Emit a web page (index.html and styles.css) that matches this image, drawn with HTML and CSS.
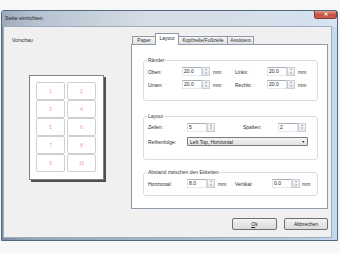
FILE: index.html
```html
<!DOCTYPE html>
<html lang="de">
<head>
    <meta charset="UTF-8">
    <title>Seite einrichten</title>
    <link rel="stylesheet" href="styles.css">
</head>
<body>
    <div class="window">
        <div class="titlebar">
            <span class="title">Seite einrichten</span>
            <span class="close">✕</span>
        </div>
        <div class="client">
            <div class="preview-col">
                <div class="caption">Vorschau</div>
                <div class="page">
                    <div class="cell">1</div><div class="cell">2</div>
                    <div class="cell">3</div><div class="cell">4</div>
                    <div class="cell">5</div><div class="cell">6</div>
                    <div class="cell">7</div><div class="cell">8</div>
                    <div class="cell">9</div><div class="cell">10</div>
                </div>
            </div>

            <div class="main-col">
                <div class="tabs">
                    <div class="tab tab-paper">Paper</div>
                    <div class="tab tab-layout active">Layout</div>
                    <div class="tab tab-kopf">Kopfzeile/Fußzeile</div>
                    <div class="tab tab-assist">Assistent</div>
                </div>

                <div class="panel">
                    <div class="group group-raender">
                        <div class="legend">Ränder</div>
                        <div class="row row-raender">
                            <span>Oben:</span>
                            <div class="spin"><span class="field">20.0</span><span class="arrows"><i>▲</i><i>▼</i></span></div>
                            <span class="unit">mm</span>
                            <span>Links:</span>
                            <div class="spin"><span class="field">20.0</span><span class="arrows"><i>▲</i><i>▼</i></span></div>
                            <span class="unit">mm</span>
                        </div>
                        <div class="row row-raender">
                            <span>Unten:</span>
                            <div class="spin"><span class="field">20.0</span><span class="arrows"><i>▲</i><i>▼</i></span></div>
                            <span class="unit">mm</span>
                            <span>Rechts:</span>
                            <div class="spin"><span class="field">20.0</span><span class="arrows"><i>▲</i><i>▼</i></span></div>
                            <span class="unit">mm</span>
                        </div>
                    </div>

                    <div class="group group-layout">
                        <div class="legend">Layout</div>
                        <div class="row row-layout">
                            <span>Zeilen:</span>
                            <div class="spin"><span class="field">5</span><span class="arrows"><i>▲</i><i>▼</i></span></div>
                            <span></span>
                            <span>Spalten:</span>
                            <div class="spin"><span class="field">2</span><span class="arrows"><i>▲</i><i>▼</i></span></div>
                        </div>
                        <div class="row row-order">
                            <span>Reihenfolge:</span>
                            <div class="select"><span>Left Top, Horizontal</span><span class="drop">▼</span></div>
                        </div>
                    </div>

                    <div class="group group-abstand">
                        <div class="legend">Abstand zwischen den Etiketten</div>
                        <div class="row row-abstand">
                            <span>Horizontal:</span>
                            <div class="spin"><span class="field">8.0</span><span class="arrows"><i>▲</i><i>▼</i></span></div>
                            <span class="unit">mm</span>
                            <span>Vertikal:</span>
                            <div class="spin"><span class="field">0.0</span><span class="arrows"><i>▲</i><i>▼</i></span></div>
                            <span class="unit unit-v">mm</span>
                        </div>
                    </div>
                </div>

                <div class="buttons">
                    <button class="btn btn-ok"><u>O</u>k</button>
                    <button class="btn btn-cancel">Abbrechen</button>
                </div>
            </div>
        </div>
    </div>
</body>
</html>
```

FILE: styles.css
```css
* {
    box-sizing: border-box;
}
body {
    margin: 0;
    background: #f6f7f8;
    font-family: "Liberation Sans", Arial, sans-serif;
    font-size: 5px;
    color: #2e2e2e;
}
.window {
    width: 337px;
    height: 231px;
    margin: 10px 0 0 1px;
    border: 1px solid #56687d;
    border-radius: 3px 3px 0 0;
    background: linear-gradient(to right, #7b8ea3, #93a6ba 10%, #a8bacc 55%, #b9cde2 90%, #c6d9ee);
    display: flex;
    flex-direction: column;
}
.titlebar {
    height: 16px;
    display: flex;
    justify-content: space-between;
    align-items: flex-start;
    padding-left: 3px;
    background: linear-gradient(to right, rgba(255,255,255,0.25), rgba(255,255,255,0.55) 45%, rgba(255,255,255,0.45) 80%, rgba(255,255,255,0.3));
}
.title {
    font-size: 5.5px;
    line-height: 15px;
    color: #1c1c1c;
}
.close {
    width: 23px;
    height: 8px;
    margin-top: 0;
    border: 1px solid #7d3b36;
    border-top: none;
    border-radius: 0 0 3px 3px;
    background: linear-gradient(#e29a8c, #c74f3f 55%, #d0624f);
    color: #fff;
    font-size: 5px;
    line-height: 7px;
    text-align: center;
    font-weight: bold;
}
.client {
    height: 210px;
    margin: 0 6px 3px 2px;
    background: #f0f0f0;
    box-shadow: 0 0 0 1px #9eadbc;
    display: flex;
}

/* Vorschau */
.preview-col {
    width: 127px;
    padding: 10px 0 0 8px;
}
.caption {
    line-height: 7px;
    height: 7px;
}
.page {
    width: 75px;
    height: 105px;
    margin: 31px 0 0 17px;
    padding: 6px 0 0 6px;
    background: #fff;
    border: 1px solid #808080;
    box-shadow: 2px 2px 0 #505050;
    display: grid;
    grid-template-columns: 29px 29px;
    grid-auto-rows: 18px;
    column-gap: 2px;
    align-content: start;
}
.cell {
    border: 1px solid #cfcfcf;
    border-radius: 2px;
    color: #f19191;
    font-size: 4.5px;
    display: flex;
    align-items: center;
    justify-content: center;
}

/* Tabs */
.main-col {
    width: 199px;
    padding-top: 6px;
    display: flex;
    flex-direction: column;
}
.tabs {
    height: 11px;
    display: flex;
    align-items: flex-end;
    padding-left: 1px;
    position: relative;
    z-index: 1;
}
.tab {
    height: 8px;
    border: 1px solid #8e9aa7;
    border-bottom: none;
    margin-right: -1px;
    background: linear-gradient(#f5f5f5, #e2e2e2);
    text-align: center;
    line-height: 7px;
    border-radius: 1px 1px 0 0;
}
.tab.active {
    height: 12px;
    margin-bottom: -1px;
    background: #fff;
    line-height: 9px;
}
.tab-paper { width: 24px; }
.tab-layout { width: 24px; }
.tab-kopf { width: 50px; }
.tab-assist { width: 27px; }

.panel {
    width: 197px;
    height: 165px;
    border: 1px solid #8e9aa7;
    background: #fff;
    padding: 15px 0 0 11px;
}

/* Gruppen */
.group {
    width: 175px;
    border: 1px solid #d5dfe5;
    border-radius: 3px;
    padding: 0 0 0 4px;
}
.legend {
    width: fit-content;
    height: 7px;
    line-height: 7px;
    margin: -4px 0 0 -1px;
    padding: 0 1px;
    background: #fff;
    color: #3a3a3a;
}
.group-raender {
    height: 41px;
}
.group-layout {
    height: 44px;
    margin-top: 15px;
}
.group-abstand {
    height: 24px;
    margin-top: 12px;
}
.row {
    display: grid;
    align-items: center;
}
.row-raender {
    height: 13px;
    grid-template-columns: 34px 28px 25px 32px 28px 20px;
}
.row-raender:first-of-type,
.legend + .row {
    margin-top: 1px;
}
.row-layout {
    height: 12px;
    margin-top: 2px;
    grid-template-columns: 39px 28px 28px 35px 28px;
}
.row-order {
    height: 13px;
    margin-top: 2px;
    grid-template-columns: 39px 121px;
}
.row-abstand {
    height: 13px;
    margin-top: 1px;
    grid-template-columns: 39px 28px 20px 37px 28px 10px;
}
.unit {
    padding-left: 3px;
}
.unit-v {
    padding-left: 2px;
}

/* Eingabefelder */
.spin {
    display: flex;
    height: 9px;
}
.field {
    width: 20px;
    border: 1px solid #abadb3;
    border-color: #abadb3 #dbdfe6 #e3e9ef #e2e3ea;
    background: #fff;
    line-height: 7px;
    padding-left: 1px;
    color: #222;
}
.arrows {
    width: 8px;
    display: flex;
    flex-direction: column;
    border: 1px solid #c5cdd6;
    background: linear-gradient(#f7f7f7, #e4e8ec);
}
.arrows i {
    flex: 1;
    font-style: normal;
    font-size: 2.5px;
    line-height: 3.5px;
    text-align: center;
    color: #56708f;
}
.select {
    height: 9px;
    border: 1px solid #7a7a7a;
    border-radius: 1px;
    background: linear-gradient(#f4f4f4, #e1e1e1);
    display: flex;
    justify-content: space-between;
    align-items: center;
    padding: 0 2px 0 2px;
    color: #222;
}
.drop {
    font-size: 3.5px;
    color: #111;
}

/* Buttons */
.buttons {
    display: flex;
    justify-content: flex-end;
    gap: 7px;
    margin-top: 9px;
    padding-right: 2px;
}
.btn {
    height: 12px;
    border: 1px solid #707070;
    border-radius: 2px;
    background: linear-gradient(#f3f3f3, #e6e6e6 50%, #dadada);
    font-family: "Liberation Sans", Arial, sans-serif;
    font-size: 5px;
    color: #222;
    padding: 0;
}
.btn-ok { width: 45px; }
.btn-cancel { width: 44px; }
```
